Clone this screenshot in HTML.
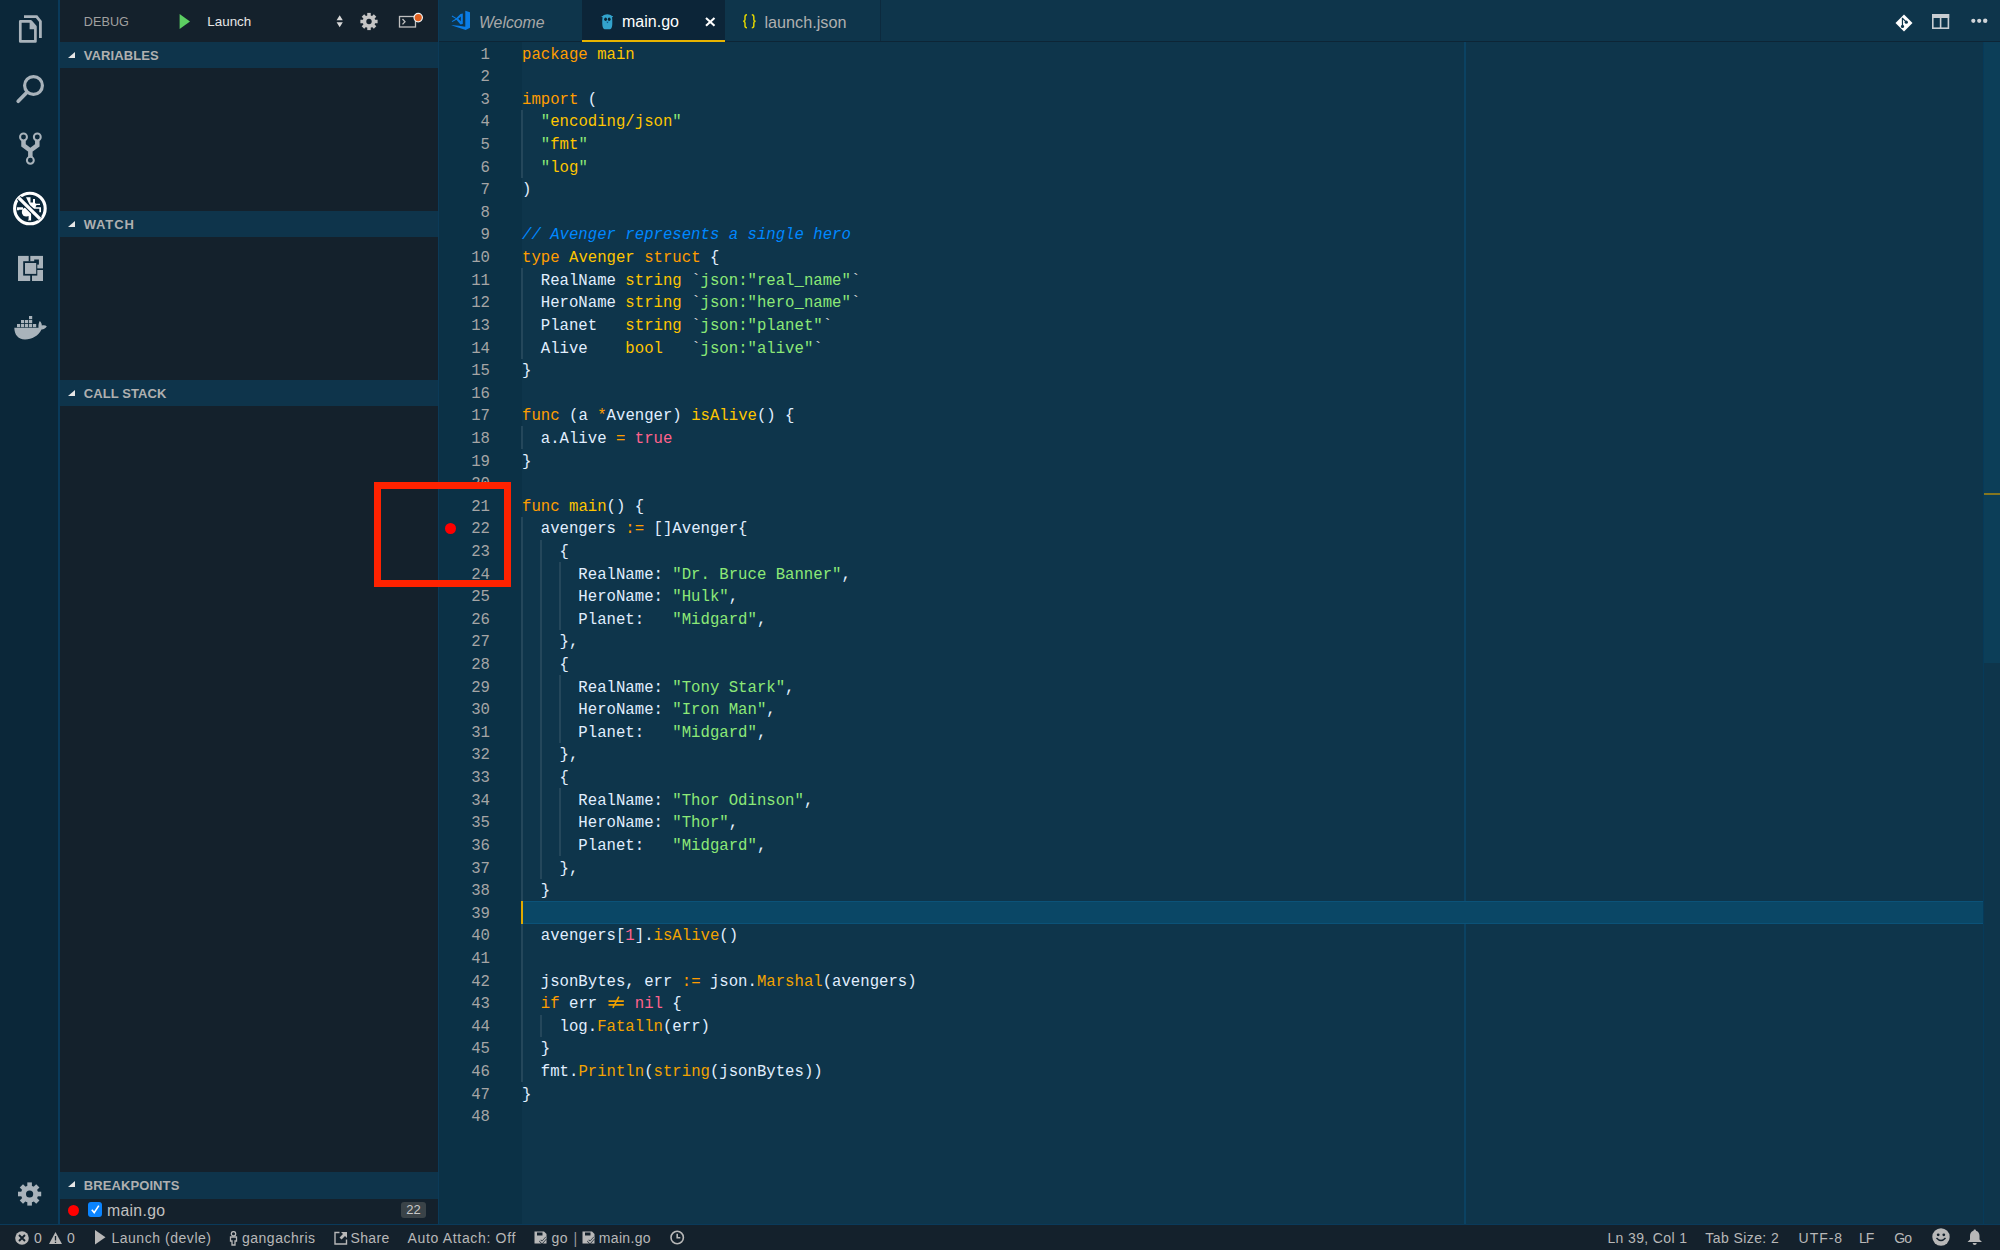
<!DOCTYPE html>
<html><head><meta charset="utf-8">
<style>
*{margin:0;padding:0;box-sizing:border-box}
html,body{width:2000px;height:1250px;overflow:hidden;background:#0e354b;font-family:"Liberation Sans",sans-serif}
.abs{position:absolute}
#act{left:0;top:0;width:60px;height:1224px;background:#0b2739;border-right:2px solid #0a3a5a}
#side{left:60px;top:0;width:379px;height:1224px;background:#14212c;border-right:1px solid #0c3a58}
.sechdr{position:absolute;left:0;width:378px;height:26.4px;background:#0e344b;color:#b0b0b0;font-weight:bold;font-size:13px;letter-spacing:0.1px}
.sechdr .tri{position:absolute;left:8.4px;top:9.8px;width:0;height:0;border-left:7px solid transparent;border-bottom:6.5px solid #e6e6e6}
.sechdr span{position:absolute;left:23.7px;top:6.2px}
#tabs{left:439px;top:0;width:1561px;height:42px;background:#0e354b}
.tab{position:absolute;top:0;height:42px}
#editor{left:439px;top:42px;width:1561px;height:1182px;background:#0e354b}
#status{left:0;top:1223.8px;width:2000px;height:26.2px;background:#14212c;border-top:1.5px solid #0a3a5a;color:#b8b8b8;font-size:14px}
#status .t{position:absolute;top:5.1px;white-space:nowrap}
#code{position:absolute;left:522px;top:43.6px;font-family:"Liberation Mono",monospace;font-size:15.66px;line-height:22.62px;color:#e1efff}
#code .l{white-space:pre;height:22.62px}
#nums{position:absolute;left:439px;top:43.6px;width:51px;font-family:"Liberation Mono",monospace;font-size:15.66px;line-height:22.62px;text-align:right;color:#a5a5a5}
#nums div{height:22.62px}
.k{color:#ff9d00}.y{color:#ffc600}.s{color:#8ce977}.p{color:#ff628c}.c{color:#0088ff;font-style:italic}.g{color:#d0d0d0}
.ne{display:inline-block;position:relative;width:18.8px;height:22px;vertical-align:top}
.f{color:#f2a300}
.guide{position:absolute;width:2px;background:#24475b}
</style></head><body>
<div id="act" class="abs">
<svg width="58" height="1224" style="position:absolute;left:0;top:0">
 <g fill="none" stroke="#a9b3bb" stroke-width="2.6">
  <path d="M24 16.7 H36.6 L40.4 21.5 V38" stroke-width="2.8"/>
  <path d="M20.3 21.4 H30.8 L35.4 26.7 V41.4 H20.3 Z" stroke-width="2.7" stroke-linejoin="round"/>
  <circle cx="33.5" cy="85.5" r="8.9" stroke-width="3.2"/>
  <path d="M27 92.3 L18.2 101.2" stroke-width="3.7" stroke-linecap="round"/>
  <circle cx="23.5" cy="137" r="3.45" stroke-width="2"/>
  <circle cx="37.3" cy="137" r="3.45" stroke-width="2"/>
  <circle cx="30.35" cy="160.3" r="3.45" stroke-width="2"/>
  <path d="M23.5 140.5 V145.3 L30.35 150.5 V157 M37.3 140.5 V145.3 L30.35 150.5" stroke-width="4.5" stroke-linejoin="miter"/>
 </g>
 <path d="M29.6 21.5 H31 L35.4 26.5 V29.2 H29.6 Z" fill="#a9b3bb"/>
 <g transform="translate(10 188)">
  <circle cx="19.9" cy="20.5" r="15.3" fill="none" stroke="#fff" stroke-width="3.1"/>
  <g fill="#fff">
   <path d="M16 9.3 H20.5 V14.5 L23 14.5 V11 H25 V15 L26 15.7 H30 V17 H26.5 L25.5 19.2 H31 V24.3 H29.3 V20.8 H24 L20 17.5 Z"/>
   <path d="M7 19.2 H13 V21.8 H9 V22.3 H7 Z"/>
   <circle cx="16.3" cy="24" r="4.5"/>
   <path d="M14 20 L18 19.5 L21.1 23 V32.6 H17.9 V31.7 H18.6 V27 Z"/>
  </g>
  <path d="M8.8 9.8 L30 30.8" stroke="#0b2739" stroke-width="5.4"/>
  <path d="M8.8 9.8 L30 30.8" stroke="#fff" stroke-width="3.3"/>
 </g>
 <rect x="18" y="255.9" width="25" height="25.1" fill="#a9b3bb"/>
 <g fill="#0b2739">
  <rect x="23.2" y="261.2" width="14.1" height="14.4"/>
  <rect x="34.2" y="259.5" width="4.7" height="5.1"/>
  <rect x="28.7" y="255" width="1.6" height="6.5"/>
  <rect x="30.2" y="275" width="1.8" height="7"/>
  <rect x="37" y="268.4" width="7" height="1.6"/>
 </g>
 <rect x="25" y="263" width="11.2" height="10.9" fill="#a9b3bb"/>
 <g fill="#a9b3bb">
  <path d="M14.3 327.8 H38.5 C38.2 325 38.8 322.5 39.8 321 C41.2 322.3 42 324 41.8 325.6 C43.6 325 45.5 325.2 46.8 326.2 C46 328.2 43.8 329.3 41.5 329.5 C38.5 335.8 32 339.5 25 339.5 C17.8 339.5 14.5 334.5 14.3 327.8 Z"/>
  <rect x="17" y="324" width="3.2" height="3.2"/><rect x="21" y="324" width="3.2" height="3.2"/><rect x="25" y="324" width="3.2" height="3.2"/><rect x="29" y="324" width="3.2" height="3.2"/><rect x="33" y="324" width="3.2" height="3.2"/>
  <rect x="21" y="320" width="3.2" height="3.2"/><rect x="25" y="320" width="3.2" height="3.2"/><rect x="29" y="320" width="3.2" height="3.2"/>
  <rect x="29" y="316" width="3.2" height="3.2"/>
 </g>
 <g transform="translate(29.6 1194)" fill="#a9b3bb"><circle r="8.6"/><rect x="-2.30" y="-11.60" width="4.60" height="11.60" transform="rotate(0)"/><rect x="-2.30" y="-11.60" width="4.60" height="11.60" transform="rotate(45)"/><rect x="-2.30" y="-11.60" width="4.60" height="11.60" transform="rotate(90)"/><rect x="-2.30" y="-11.60" width="4.60" height="11.60" transform="rotate(135)"/><rect x="-2.30" y="-11.60" width="4.60" height="11.60" transform="rotate(180)"/><rect x="-2.30" y="-11.60" width="4.60" height="11.60" transform="rotate(225)"/><rect x="-2.30" y="-11.60" width="4.60" height="11.60" transform="rotate(270)"/><rect x="-2.30" y="-11.60" width="4.60" height="11.60" transform="rotate(315)"/><circle r="3.6" fill="#0b2739"/></g>
</svg>
</div>

<div id="side" class="abs">
  <div class="abs" style="left:23.7px;top:14.5px;color:#a0a0a0;font-size:12.6px;letter-spacing:0.1px">DEBUG</div>
  <svg class="abs" style="left:118px;top:12px" width="270" height="22">
    <path d="M1.6 2 L12 9.5 L1.6 17 Z" fill="#5ccf62"/>
    <path d="M277.3 0 Z"/>
    <path d="M161.7 3.3 L164.8 8.3 H158.6 Z M158.6 10.3 H164.8 L161.7 15.3 Z" fill="#d8d8d8"/>
  </svg>
  <div class="abs" style="left:147.3px;top:14px;color:#e6e6e6;font-size:13.4px">Launch</div>
  <svg class="abs" style="left:300px;top:12px" width="20" height="20">
    <g transform="translate(9 9.5)" fill="#c5c5c5"><circle r="6.3"/><rect x="-1.75" y="-8.60" width="3.50" height="8.60" transform="rotate(0)"/><rect x="-1.75" y="-8.60" width="3.50" height="8.60" transform="rotate(45)"/><rect x="-1.75" y="-8.60" width="3.50" height="8.60" transform="rotate(90)"/><rect x="-1.75" y="-8.60" width="3.50" height="8.60" transform="rotate(135)"/><rect x="-1.75" y="-8.60" width="3.50" height="8.60" transform="rotate(180)"/><rect x="-1.75" y="-8.60" width="3.50" height="8.60" transform="rotate(225)"/><rect x="-1.75" y="-8.60" width="3.50" height="8.60" transform="rotate(270)"/><rect x="-1.75" y="-8.60" width="3.50" height="8.60" transform="rotate(315)"/><circle r="2.7" fill="#14212c"/></g>
  </svg>
  <svg class="abs" style="left:336px;top:8px" width="30" height="24">
    <rect x="3.5" y="8.5" width="16" height="10.5" fill="none" stroke="#c0c0c0" stroke-width="1.3"/>
    <path d="M6.5 11 L9 13.7 L6.5 16.4" fill="none" stroke="#c0c0c0" stroke-width="1.3"/>
    <circle cx="22.2" cy="9.6" r="4.2" fill="#e06020" stroke="#f2f2f2" stroke-width="1.2"/>
  </svg>
  <div class="sechdr" style="top:42px"><i class="tri"></i><span>VARIABLES</span></div>
  <div class="sechdr" style="top:211px"><i class="tri"></i><span style="letter-spacing:0.85px">WATCH</span></div>
  <div class="sechdr" style="top:380px"><i class="tri"></i><span>CALL STACK</span></div>
  <div class="sechdr" style="top:1171.5px;height:27.5px"><i class="tri"></i><span>BREAKPOINTS</span></div>
  <div class="abs" style="left:7.6px;top:1204.5px;width:11.4px;height:11.4px;border-radius:50%;background:#f00"></div>
  <div class="abs" style="left:28px;top:1202px;width:14.2px;height:14.6px;border-radius:3px;background:#0a84ff"></div>
  <svg class="abs" style="left:28px;top:1202px" width="15" height="15"><path d="M3.8 7.8 L6.2 10.6 L10.8 3.6" fill="none" stroke="#fff" stroke-width="1.6"/></svg>
  <div class="abs" style="left:47px;top:1201.6px;color:#c0c0c0;font-size:15.8px;letter-spacing:0.3px">main.go</div>
  <div class="abs" style="left:341px;top:1202.4px;width:25px;height:15.6px;border-radius:3px;background:#3a4348;color:#c8c8c8;font-size:13px;text-align:center;line-height:15.6px">22</div>
</div>
<div id="tabs" class="abs">
  <div class="abs" style="left:0;top:40.5px;width:1561px;height:1.5px;background:#0d2536"></div>
<div class="tab" style="left:0;width:143px;height:40.5px;background:#0e354b">
  <svg class="abs" style="left:6px;top:5px" width="35" height="33"><g fill="#0a7de6"><path d="M20.3 5.8 L25 7.3 V22.7 L20.7 25 L6.2 20.3 C10 19.8 15 20.8 20.3 21.8 Z"/><path fill-rule="evenodd" d="M17.8 8.6 V18.9 L15.5 19.5 L10.6 13.7 L15.5 8.9 Z M15.8 11.6 L13.3 13.8 L15.8 16.3 Z"/><path d="M7.2 10.6 L12.8 13.9 L7.2 17.1 L6.7 16.3 L10.8 13.8 L6.7 11.5 Z"/></g></svg>
  <div class="abs" style="left:40px;top:13.6px;color:#a8a8a8;font-size:15.8px;font-style:italic">Welcome</div>
</div>
<div class="tab" style="left:143px;width:143px;background:#0c2538;border-bottom:2px solid #e8b400">
  <svg class="abs" style="left:19px;top:13.5px" width="13" height="16"><path d="M1.5 2.2 C0.8 1.6 0.3 2 0.5 2.6 L1.6 3.6 C1.2 5.5 1.2 8 1.3 10 C1.4 12.5 1.8 14.5 3.5 15.2 H9.2 C10.8 14.5 11.2 12.5 11.3 10 C11.4 8 11.4 5.5 11 3.6 L12.1 2.6 C12.3 2 11.8 1.6 11.1 2.2 C10 1 8 0.3 6.3 0.3 C4.6 0.3 2.6 1 1.5 2.2 Z" fill="#33a3cc"/><ellipse cx="4.6" cy="5.3" rx="1.4" ry="1.7" fill="#0a2233"/><ellipse cx="8.2" cy="5.3" rx="1.4" ry="1.7" fill="#0a2233"/><path d="M5.3 7.7 H7.6 L6.5 9.2 Z" fill="#0a4a80"/></svg>
  <div class="abs" style="left:40px;top:13.3px;color:#ffffff;font-size:16px">main.go</div>
  <svg class="abs" style="left:122.5px;top:17px" width="11" height="10"><path d="M1 1 L9.5 8.7 M9.5 1 L1 8.7" stroke="#fff" stroke-width="2.1"/></svg>
</div>
<div class="tab" style="left:286px;width:156px;height:40.5px;background:#0e354b;border-right:1px solid #0c2a3e">
  <svg class="abs" style="left:17px;top:14px" width="16" height="15"><path d="M5 0.8 C3.2 0.8 3 1.5 3 3 V5.6 C3 6.6 2.5 7.1 1.3 7.3 C2.5 7.5 3 8 3 9 V11.8 C3 13.3 3.2 13.8 5 13.8 M9.8 0.8 C11.6 0.8 11.8 1.5 11.8 3 V5.6 C11.8 6.6 12.3 7.1 13.5 7.3 C12.3 7.5 11.8 8 11.8 9 V11.8 C11.8 13.3 11.6 13.8 9.8 13.8" fill="none" stroke="#e0d400" stroke-width="1.5"/></svg>
  <div class="abs" style="left:39.5px;top:13.2px;color:#b0b0b0;font-size:16.2px">launch.json</div>
</div>
<svg class="abs" style="left:1456px;top:14px" width="18" height="18"><path d="M9 0.5 L17.5 9 L9 17.5 L0.5 9 Z" fill="#fff"/><path d="M7.4 3.8 L7.5 12.4 M7.6 4.3 L11.3 8.2" stroke="#0e354b" stroke-width="1.2"/><circle cx="7.5" cy="12.4" r="1.6" fill="#0e354b"/><circle cx="11.3" cy="8.2" r="1.6" fill="#0e354b"/></svg>
<svg class="abs" style="left:1492.5px;top:14px" width="20" height="18"><rect x="0.8" y="0.8" width="15.6" height="13.4" fill="none" stroke="#c8cdd2" stroke-width="1.6"/><rect x="0" y="0" width="17.2" height="4" fill="#c8cdd2"/><rect x="7.8" y="0" width="1.6" height="15" fill="#c8cdd2"/></svg>
<svg class="abs" style="left:1530px;top:17px" width="20" height="8"><circle cx="4.3" cy="3.8" r="2.1" fill="#d0d4d8"/><circle cx="10.2" cy="3.8" r="2.1" fill="#d0d4d8"/><circle cx="16.2" cy="3.8" r="2.2" fill="#d0d4d8"/></svg>

</div>
<div id="editor" class="abs">
  <div class="abs" style="left:0;top:0;width:82.5px;height:1182px;background:#0b3146"></div>
<div class="abs" style="left:1025px;top:0;width:2px;height:1182px;background:#0b4262"></div>
<div class="abs" style="left:83px;top:859.45px;width:1461px;height:22.62px;background:#0a4766;border-top:1.5px solid #0b5278;border-bottom:1.5px solid #0b5278"></div>
<div class="abs" style="left:1544px;top:0;width:1px;height:1182px;background:#063a5a"></div>
<div class="abs" style="left:1545px;top:0;width:16px;height:621px;background:#0c3e58"></div>
<div class="abs" style="left:1545px;top:451px;width:16px;height:2px;background:#857620"></div>
</div>
<div id="nums">
<div>1</div>
<div>2</div>
<div>3</div>
<div>4</div>
<div>5</div>
<div>6</div>
<div>7</div>
<div>8</div>
<div>9</div>
<div>10</div>
<div>11</div>
<div>12</div>
<div>13</div>
<div>14</div>
<div>15</div>
<div>16</div>
<div>17</div>
<div>18</div>
<div>19</div>
<div>20</div>
<div>21</div>
<div>22</div>
<div>23</div>
<div>24</div>
<div>25</div>
<div>26</div>
<div>27</div>
<div>28</div>
<div>29</div>
<div>30</div>
<div>31</div>
<div>32</div>
<div>33</div>
<div>34</div>
<div>35</div>
<div>36</div>
<div>37</div>
<div>38</div>
<div>39</div>
<div>40</div>
<div>41</div>
<div>42</div>
<div>43</div>
<div>44</div>
<div>45</div>
<div>46</div>
<div>47</div>
<div>48</div>
</div>
<div id="code">
<div class="l"><span class="k">package</span> <span class="y">main</span></div>
<div class="l"> </div>
<div class="l"><span class="k">import</span> (</div>
<div class="l">  <span class="s">&quot;</span><span class="y">encoding/json</span><span class="s">&quot;</span></div>
<div class="l">  <span class="s">&quot;</span><span class="y">fmt</span><span class="s">&quot;</span></div>
<div class="l">  <span class="s">&quot;</span><span class="y">log</span><span class="s">&quot;</span></div>
<div class="l">)</div>
<div class="l"> </div>
<div class="l"><span class="c">// Avenger represents a single hero</span></div>
<div class="l"><span class="k">type</span> <span class="y">Avenger</span> <span class="k">struct</span> {</div>
<div class="l">  RealName <span class="y">string</span> <span class="g">`</span><span class="s">json:&quot;real_name&quot;</span><span class="g">`</span></div>
<div class="l">  HeroName <span class="y">string</span> <span class="g">`</span><span class="s">json:&quot;hero_name&quot;</span><span class="g">`</span></div>
<div class="l">  Planet   <span class="y">string</span> <span class="g">`</span><span class="s">json:&quot;planet&quot;</span><span class="g">`</span></div>
<div class="l">  Alive    <span class="y">bool</span>   <span class="g">`</span><span class="s">json:&quot;alive&quot;</span><span class="g">`</span></div>
<div class="l">}</div>
<div class="l"> </div>
<div class="l"><span class="k">func</span> (a <span class="k">*</span>Avenger) <span class="y">isAlive</span>() {</div>
<div class="l">  a.Alive <span class="k">=</span> <span class="p">true</span></div>
<div class="l">}</div>
<div class="l"> </div>
<div class="l"><span class="k">func</span> <span class="y">main</span>() {</div>
<div class="l">  avengers <span class="k">:=</span> []Avenger{</div>
<div class="l">    {</div>
<div class="l">      RealName: <span class="s">&quot;Dr. Bruce Banner&quot;</span>,</div>
<div class="l">      HeroName: <span class="s">&quot;Hulk&quot;</span>,</div>
<div class="l">      Planet:   <span class="s">&quot;Midgard&quot;</span>,</div>
<div class="l">    },</div>
<div class="l">    {</div>
<div class="l">      RealName: <span class="s">&quot;Tony Stark&quot;</span>,</div>
<div class="l">      HeroName: <span class="s">&quot;Iron Man&quot;</span>,</div>
<div class="l">      Planet:   <span class="s">&quot;Midgard&quot;</span>,</div>
<div class="l">    },</div>
<div class="l">    {</div>
<div class="l">      RealName: <span class="s">&quot;Thor Odinson&quot;</span>,</div>
<div class="l">      HeroName: <span class="s">&quot;Thor&quot;</span>,</div>
<div class="l">      Planet:   <span class="s">&quot;Midgard&quot;</span>,</div>
<div class="l">    },</div>
<div class="l">  }</div>
<div class="l"> </div>
<div class="l">  avengers[<span class="p">1</span>].<span class="f">isAlive</span>()</div>
<div class="l"> </div>
<div class="l">  jsonBytes, err <span class="k">:=</span> json.<span class="f">Marshal</span>(avengers)</div>
<div class="l">  <span class="k">if</span> err <span class="ne"><svg width="19" height="22" style="position:absolute;left:0;top:0"><path d="M1.5 8.1 H16.8 M1.5 11.9 H16.8 M11.9 3.6 L5.9 14.8" stroke="#f0a000" stroke-width="1.6" fill="none"/></svg>  </span> <span class="p">nil</span> {</div>
<div class="l">    log.<span class="f">Fatalln</span>(err)</div>
<div class="l">  }</div>
<div class="l">  fmt.<span class="f">Println</span>(<span class="f">string</span>(jsonBytes))</div>
<div class="l">}</div>
<div class="l"> </div>
</div>
<div class="guide" style="left:521.0px;top:109.85px;height:67.85px"></div>
<div class="guide" style="left:521.0px;top:268.17px;height:90.47px"></div>
<div class="guide" style="left:521.0px;top:426.49px;height:22.62px"></div>
<div class="guide" style="left:521.0px;top:516.96px;height:565.43px"></div>
<div class="guide" style="left:539.8px;top:539.57px;height:339.25px"></div>
<div class="guide" style="left:539.8px;top:1014.53px;height:22.62px"></div>
<div class="guide" style="left:558.6px;top:562.19px;height:67.85px"></div>
<div class="guide" style="left:558.6px;top:675.28px;height:67.85px"></div>
<div class="guide" style="left:558.6px;top:788.36px;height:67.85px"></div>
<div class="abs" style="left:521px;top:901.45px;width:2px;height:22.62px;background:#e0aa00"></div>
<div class="abs" style="left:445px;top:522.5px;width:11px;height:11px;border-radius:50%;background:#f00"></div>
<div class="abs" style="left:374px;top:482px;width:137px;height:105px;border:7px solid #ff2200"></div>
<div id="status" class="abs">
  <svg class="abs" style="left:15.0px;top:6.7px" width="14" height="14"><circle cx="7" cy="7" r="6.8" fill="#b8b8b8"/><path d="M4 4 L10 10 M10 4 L4 10" stroke="#14212c" stroke-width="1.9"/></svg>
<div class="t" style="left:34.0px;letter-spacing:0.00px">0</div>
<svg class="abs" style="left:49.0px;top:6.7px" width="14" height="14"><path d="M6.5 1 L13 13 H0 Z" fill="#b8b8b8"/><path d="M6.5 5 V9.5 M6.5 10.8 V12" stroke="#14212c" stroke-width="1.3"/></svg>
<div class="t" style="left:67.0px;letter-spacing:0.00px">0</div>
<svg class="abs" style="left:95.0px;top:5.7px" width="12" height="15"><path d="M0 0 L10.5 7.3 L0 14.6 Z" fill="#b8b8b8"/></svg>
<div class="t" style="left:111.4px;letter-spacing:0.54px">Launch (devle)</div>
<svg class="abs" style="left:229.0px;top:6.7px" width="10" height="15"><circle cx="4.5" cy="2.8" r="2.2" fill="none" stroke="#b8b8b8" stroke-width="1.3"/><path d="M1.5 6 H7.5 V10 H6 V14 H3 V10 H1.5 Z" fill="none" stroke="#b8b8b8" stroke-width="1.3"/></svg>
<div class="t" style="left:242.0px;letter-spacing:0.50px">gangachris</div>
<svg class="abs" style="left:333.6px;top:6.7px" width="14" height="14"><path d="M5.5 1.5 H1 V13 H12.5 V8.5" fill="none" stroke="#b8b8b8" stroke-width="1.4"/><path d="M7 1 H13 V7 L11 5 L7.5 8.5 L5.5 6.5 L9 3 Z" fill="#b8b8b8"/></svg>
<div class="t" style="left:350.4px;letter-spacing:0.40px">Share</div>
<div class="t" style="left:407.5px;letter-spacing:0.67px">Auto Attach: Off</div>
<svg class="abs" style="left:534.0px;top:6.7px" width="14" height="14"><path d="M0.5 0.5 H10 L12.5 3 V12.5 H0.5 Z" fill="#b8b8b8"/><rect x="3" y="1.5" width="5.5" height="3" fill="#14212c"/><path d="M6 9.5 L8 11.5 L12.5 6.5" fill="none" stroke="#14212c" stroke-width="2.6"/><path d="M6 9.5 L8 11.5 L12.5 6.5" fill="none" stroke="#b8b8b8" stroke-width="1.3"/></svg>
<div class="t" style="left:551.6px;letter-spacing:0.40px">go</div>
<div class="t" style="left:573.5px;letter-spacing:0.00px"><span style="display:inline-block;transform:scaleY(1.15);color:#9a9a9a">|</span></div>
<svg class="abs" style="left:581.7px;top:6.7px" width="14" height="14"><path d="M0.5 0.5 H10 L12.5 3 V12.5 H0.5 Z" fill="#b8b8b8"/><rect x="3" y="1.5" width="5.5" height="3" fill="#14212c"/><path d="M6 9.5 L8 11.5 L12.5 6.5" fill="none" stroke="#14212c" stroke-width="2.6"/><path d="M6 9.5 L8 11.5 L12.5 6.5" fill="none" stroke="#b8b8b8" stroke-width="1.3"/></svg>
<div class="t" style="left:598.8px;letter-spacing:0.32px">main.go</div>
<svg class="abs" style="left:669.7px;top:5.7px" width="15" height="15"><circle cx="7.2" cy="7.5" r="6.2" fill="none" stroke="#b8b8b8" stroke-width="1.6"/><path d="M7.2 3.8 V7.8 H10.3" fill="none" stroke="#b8b8b8" stroke-width="1.6"/></svg>
<div class="t" style="left:1607.4px;letter-spacing:0.38px">Ln 39, Col 1</div>
<div class="t" style="left:1705.3px;letter-spacing:0.42px">Tab Size: 2</div>
<div class="t" style="left:1798.6px;letter-spacing:0.95px">UTF-8</div>
<div class="t" style="left:1859.0px;letter-spacing:-1.00px">LF</div>
<div class="t" style="left:1894.3px;letter-spacing:-1.00px">Go</div>
<svg class="abs" style="left:1931.6px;top:3.2px" width="19" height="19"><circle cx="9" cy="9" r="8.7" fill="#b8b8b8"/><circle cx="6.2" cy="6.8" r="1.4" fill="#14212c"/><circle cx="11.8" cy="6.8" r="1.4" fill="#14212c"/><path d="M4.5 10 Q9 15 13.5 10" fill="none" stroke="#14212c" stroke-width="1.4"/></svg>
<svg class="abs" style="left:1967.0px;top:4.2px" width="16" height="17"><path d="M7.7 0.5 C8.5 0.5 9 1 9 1.8 C11.5 2.5 12.5 4.5 12.5 7 V10.5 L15 13 H0.5 L3 10.5 V7 C3 4.5 4 2.5 6.5 1.8 C6.5 1 7 0.5 7.7 0.5 Z M5.7 14 H9.7 C9.7 15.2 8.8 16 7.7 16 C6.6 16 5.7 15.2 5.7 14 Z" fill="#b8b8b8"/></svg>
</div>
</body></html>
